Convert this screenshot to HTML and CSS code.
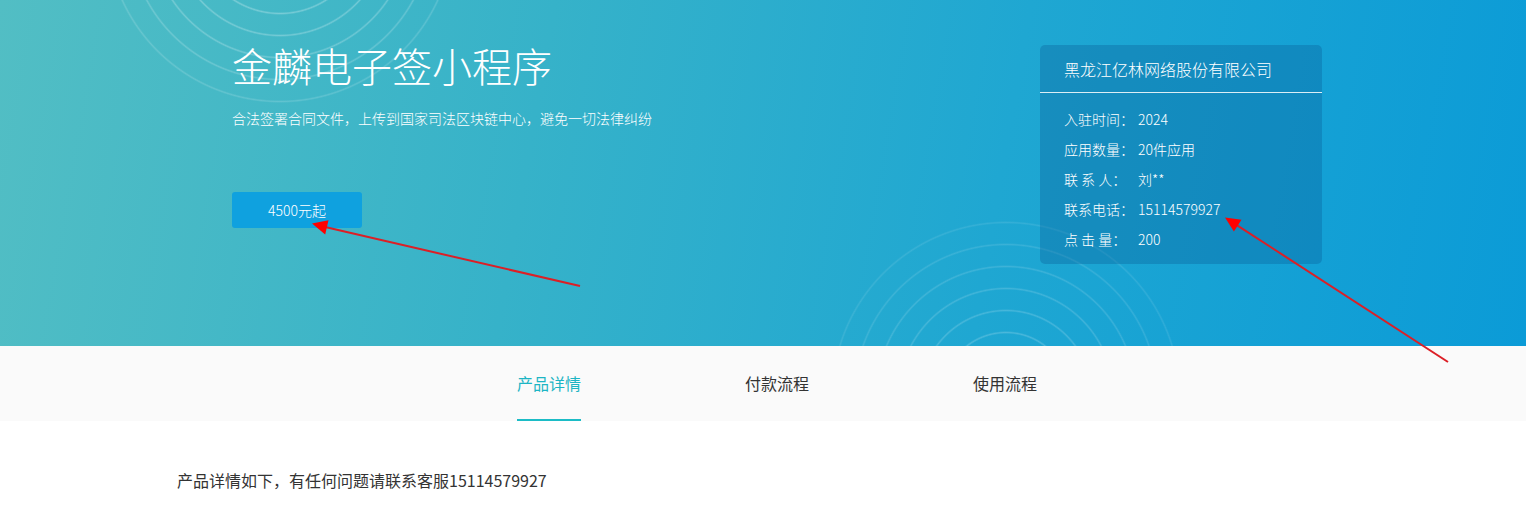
FILE: index.html
```html
<!DOCTYPE html>
<html lang="zh-CN">
<head>
<meta charset="utf-8">
<title>金麟电子签小程序</title>
<link rel="stylesheet" href="styles.css">
</head>
<body>
<div class="page">
  <section class="hero">
    <div class="hero-inner">
      <div class="intro">
        <h1 class="title">金麟电子签小程序</h1>
        <p class="subtitle">合法签署合同文件，上传到国家司法区块链中心，避免一切法律纠纷</p>
        <a class="price-btn">4500元起</a>
      </div>
      <div class="card">
        <div class="card-head">黑龙江亿林网络股份有限公司</div>
        <ul class="card-list">
          <li><span class="label">入驻时间：</span><span class="value">2024</span></li>
          <li><span class="label">应用数量：</span><span class="value">20件应用</span></li>
          <li><span class="label">联 系 人：</span><span class="value">刘**</span></li>
          <li><span class="label">联系电话：</span><span class="value">15114579927</span></li>
          <li><span class="label">点 击 量：</span><span class="value">200</span></li>
        </ul>
      </div>
    </div>
  </section>
  <nav class="tabs">
    <div class="tabs-inner">
      <a class="tab active">产品详情</a>
      <a class="tab">付款流程</a>
      <a class="tab">使用流程</a>
    </div>
  </nav>
  <main class="detail">
    <p class="detail-text">产品详情如下，有任何问题请联系客服15114579927</p>
  </main>
  <svg class="annotations" width="1526" height="528" viewBox="0 0 1526 528">
    <line x1="580" y1="286" x2="324" y2="226.8" stroke="#dc1f26" stroke-width="2"/>
    <polygon points="312,223.5 328.5,220.2 325.2,234.4" fill="#f00"/>
    <line x1="1448" y1="362" x2="1236" y2="224.6" stroke="#dc1f26" stroke-width="2"/>
    <polygon points="1225,217.5 1241.5,219.7 1233.9,231.5" fill="#f00"/>
  </svg>
</div>
</body>
</html>
```

FILE: styles.css
```css
* {
  box-sizing: border-box;
}

html, body {
  margin: 0;
  padding: 0;
  background: #ffffff;
}

body {
  font-family: "Noto Sans CJK SC", "Noto Sans", "Liberation Sans", sans-serif;
  font-weight: 400;
  color: #333333;
  overflow: hidden;
}

.page {
  position: relative;
  width: 1526px;
  height: 528px;
}

.hero {
  height: 346px;
  font-weight: 300;
  background:
    radial-gradient(circle at 280px -72px,
      transparent 62px, rgba(255,255,255,.28) 63.5px, transparent 65px,
      transparent 84px, rgba(255,255,255,.28) 85.5px, transparent 87px,
      transparent 106px, rgba(255,255,255,.26) 107.5px, transparent 109px,
      transparent 128px, rgba(255,255,255,.24) 129.5px, transparent 131px,
      transparent 150px, rgba(255,255,255,.2) 151.5px, transparent 153px,
      transparent 172px, rgba(255,255,255,.16) 173.5px, transparent 175px),
    radial-gradient(circle at 1006px 396px,
      transparent 40px, rgba(255,255,255,.2) 41.5px, transparent 43px,
      transparent 62px, rgba(255,255,255,.2) 63.5px, transparent 65px,
      transparent 84px, rgba(255,255,255,.18) 85.5px, transparent 87px,
      transparent 106px, rgba(255,255,255,.16) 107.5px, transparent 109px,
      transparent 128px, rgba(255,255,255,.14) 129.5px, transparent 131px,
      transparent 150px, rgba(255,255,255,.12) 151.5px, transparent 153px,
      transparent 172px, rgba(255,255,255,.1) 173.5px, transparent 175px),
    linear-gradient(100deg, #52bec4 0%, #36b2c9 35%, #1fa7d2 65%, #0b9bd7 100%);
}

.hero-inner {
  width: 1090px;
  margin-left: 232px;
  padding-top: 45px;
  display: flex;
  justify-content: space-between;
  align-items: flex-start;
}

.intro {
  display: flex;
  flex-direction: column;
  align-items: flex-start;
}

.title {
  margin: 0;
  font-size: 40px;
  line-height: 40px;
  font-weight: 300;
  color: #ffffff;
  letter-spacing: 0;
}

.subtitle {
  margin: 23px 0 0 0;
  font-size: 14px;
  line-height: 20px;
  color: #ffffff;
}

.price-btn {
  margin-top: 64px;
  width: 130px;
  height: 36px;
  display: flex;
  align-items: center;
  justify-content: center;
  background: #0fa1df;
  border-radius: 3px;
  color: #ffffff;
  font-size: 14px;
  text-decoration: none;
}

.card {
  width: 282px;
  background: rgba(10, 90, 150, 0.33);
  border-radius: 5px;
  color: #ffffff;
}

.card-head {
  padding: 12px 24px 11px;
  font-size: 16px;
  line-height: 24px;
  border-bottom: 1px solid rgba(255, 255, 255, 0.85);
}

.card-list {
  list-style: none;
  margin: 0;
  padding: 11px 24px 10px;
}

.card-list li {
  display: flex;
  align-items: center;
  height: 30px;
  font-size: 14px;
}

.label {
  width: 74px;
  white-space: pre;
  flex-shrink: 0;
}

.tabs {
  height: 75px;
  background: #fafafa;
}

.tabs-inner {
  width: 1090px;
  margin-left: 232px;
  height: 75px;
  display: flex;
  justify-content: center;
  gap: 164px;
}

.tab {
  height: 75px;
  padding-top: 25px;
  font-size: 16px;
  line-height: 24px;
  color: #333333;
  border-bottom: 2px solid transparent;
  text-decoration: none;
}

.tab.active {
  color: #1cb5c4;
  border-bottom-color: #1cbcc6;
}

.detail {
  padding-left: 177px;
}

.detail-text {
  margin: 47px 0 0 0;
  font-size: 16px;
  line-height: 24px;
  color: #333333;
}

.annotations {
  position: absolute;
  left: 0;
  top: 0;
  pointer-events: none;
}
```
